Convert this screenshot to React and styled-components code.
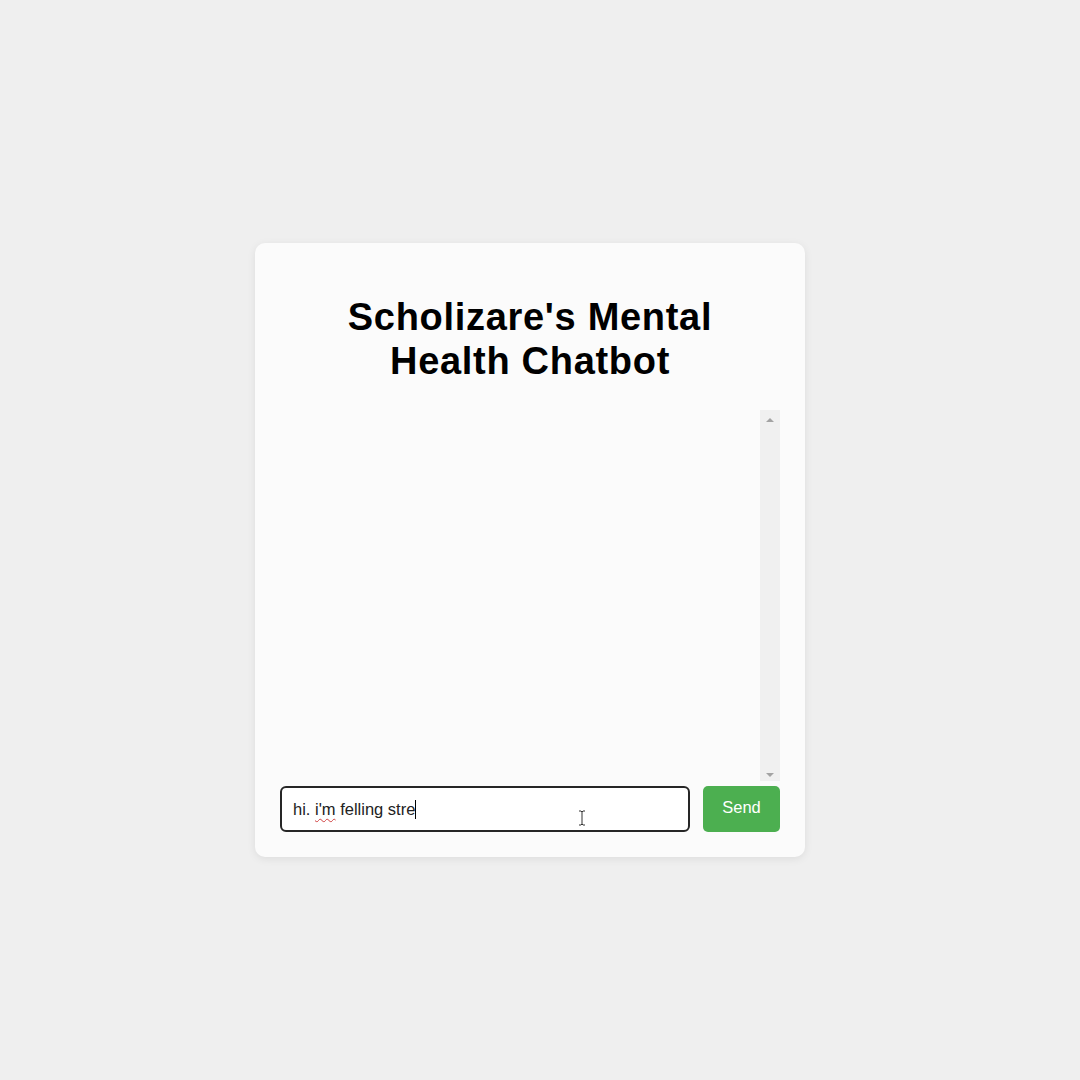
import React, { useState } from "react";
import styled, { createGlobalStyle } from "styled-components";

const GlobalStyle = createGlobalStyle`
  html, body {
    margin: 0;
    padding: 0;
    background: #efefef;
    font-family: "Liberation Sans", Arial, sans-serif;
  }
`;

const Page = styled.div`
  min-height: 1080px;
  display: flex;
  justify-content: center;
  padding: 243px 20px 0 0;
  box-sizing: border-box;
`;

const Card = styled.div`
  width: 550px;
  height: 614px;
  box-sizing: border-box;
  background: #fbfbfb;
  border-radius: 10px;
  box-shadow: 0 2px 8px rgba(0, 0, 0, 0.08);
  padding: 25px;
  display: flex;
  flex-direction: column;
`;

const Title = styled.h1`
  margin: 27px 0 27px;
  text-align: center;
  font-size: 38px;
  line-height: 44px;
  letter-spacing: 0.7px;
  font-weight: bold;
  color: #000;
`;

const ChatBox = styled.div`
  flex: 1;
  display: flex;
  min-height: 0;
`;

const Messages = styled.div`
  flex: 1;
`;

const ScrollTrack = styled.div`
  width: 20px;
  background: #f0f0f0;
  display: flex;
  flex-direction: column;
  justify-content: space-between;
  align-items: center;
  padding: 8px 0 4px;
`;

const Arrow = styled.div`
  width: 0;
  height: 0;
  border-left: 4px solid transparent;
  border-right: 4px solid transparent;
  ${(p) =>
    p.$down
      ? "border-top: 4px solid #a3a3a3;"
      : "border-bottom: 4px solid #a3a3a3;"}
`;

const InputRow = styled.div`
  display: flex;
  gap: 13px;
  margin-top: 5px;
`;

const Field = styled.div`
  position: relative;
  flex: 1;
  height: 46px;
  box-sizing: border-box;
  border: 2px solid #262626;
  border-radius: 6px;
  background: #fff;
  padding: 0 11px;
  display: flex;
  align-items: center;
  font-size: 16.5px;
  color: #222;
  cursor: text;
`;

const Misspelled = styled.span`
  text-decoration: underline wavy #d04040;
  text-decoration-thickness: 1px;
  text-underline-offset: 3px;
`;

const Caret = styled.span`
  display: inline-block;
  width: 1px;
  height: 19px;
  background: #000;
  vertical-align: middle;
`;

const MouseBeam = styled.svg`
  position: absolute;
  left: 296px;
  top: 22px;
`;

const SendButton = styled.button`
  width: 77px;
  height: 46px;
  border: none;
  border-radius: 5px;
  background: #4caf50;
  color: #fff;
  font-family: "Liberation Sans", Arial, sans-serif;
  font-size: 16.5px;
  cursor: pointer;
  padding: 0 0 4px;
`;

export default function App() {
  const [messages] = useState([]);

  return (
    <>
      <GlobalStyle />
      <Page>
        <Card>
          <Title>
            Scholizare's Mental
            <br />
            Health Chatbot
          </Title>
          <ChatBox>
            <Messages>
              {messages.map((m, i) => (
                <div key={i}>{m}</div>
              ))}
            </Messages>
            <ScrollTrack>
              <Arrow />
              <Arrow $down />
            </ScrollTrack>
          </ChatBox>
          <InputRow>
            <Field role="textbox">
              <span>
                hi. <Misspelled>i'm</Misspelled> felling stre
              </span>
              <Caret />
              <MouseBeam width="8" height="16" viewBox="0 0 8 16">
                <path
                  d="M1 1h2l1 1 1-1h2M4 2v12M1 15h2l1-1 1 1h2"
                  fill="none"
                  stroke="#333"
                  strokeWidth="1"
                />
              </MouseBeam>
            </Field>
            <SendButton>Send</SendButton>
          </InputRow>
        </Card>
      </Page>
    </>
  );
}
